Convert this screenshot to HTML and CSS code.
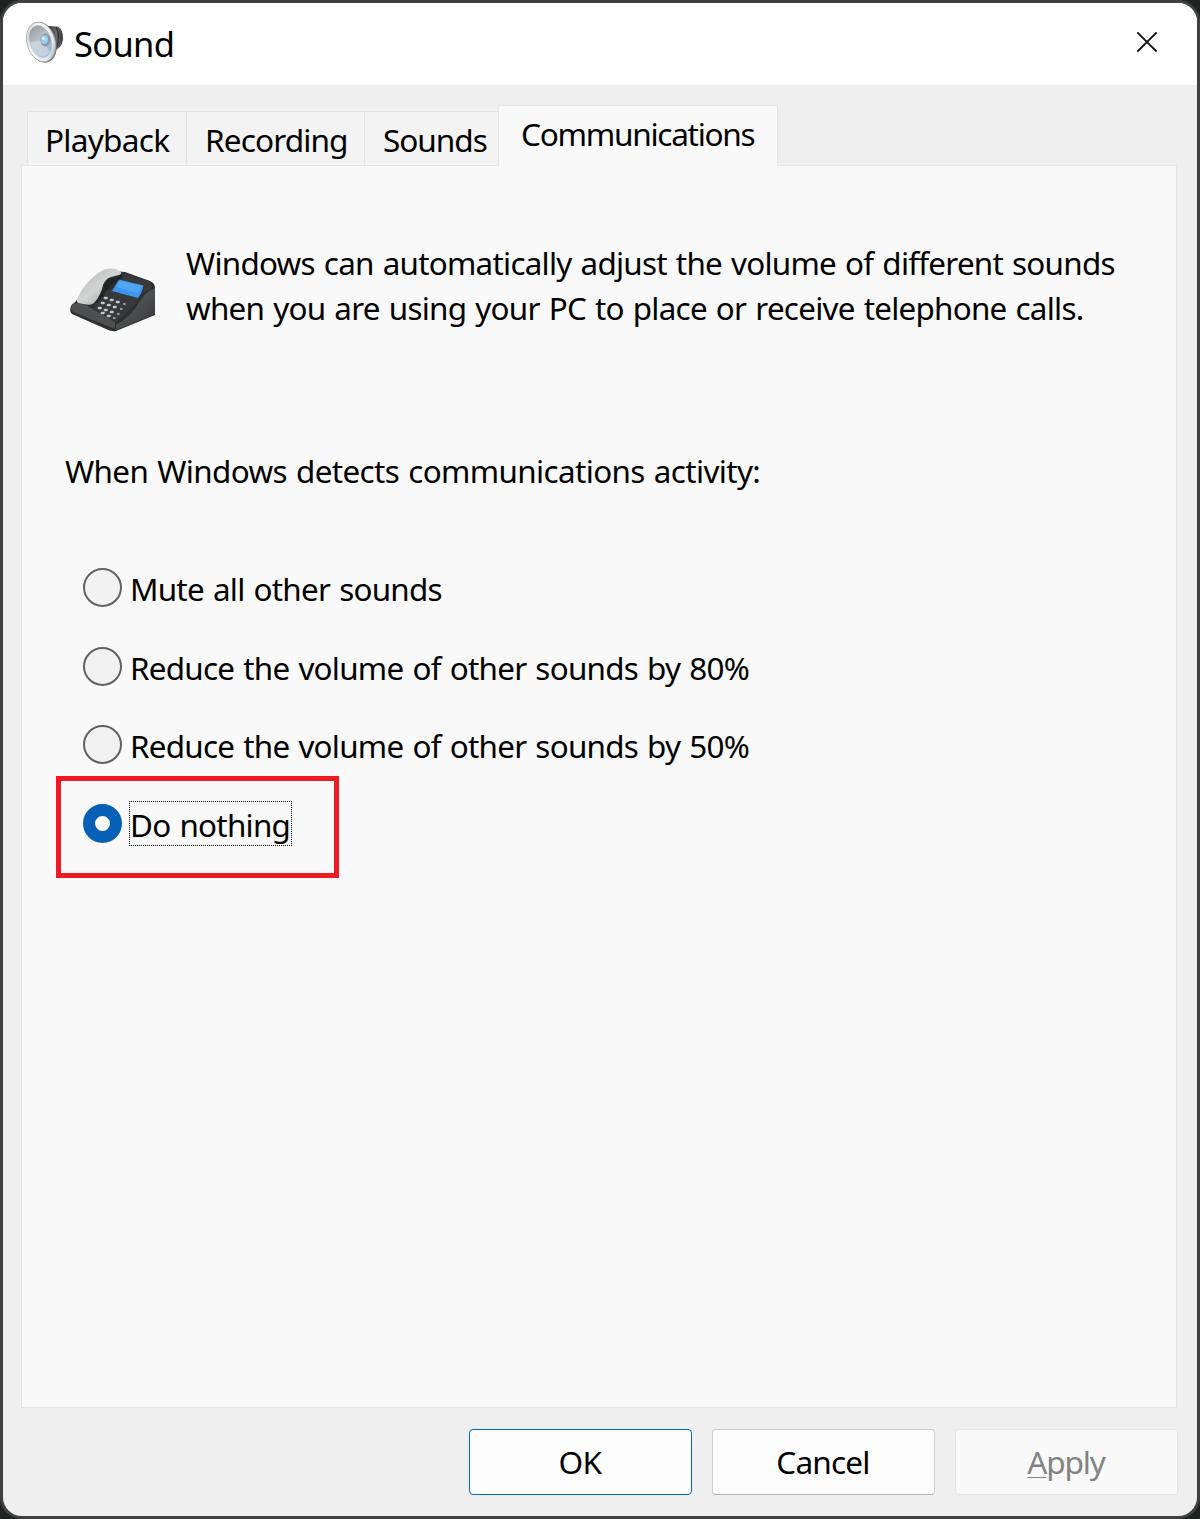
FILE: index.html
```html
<!DOCTYPE html>
<html lang="en">
<head>
<meta charset="utf-8">
<title>Sound</title>
<link rel="stylesheet" href="styles.css">
</head>
<body>
<main class="window">
  <header class="titlebar">
    <svg class="speaker" width="40" height="44" viewBox="0 0 40 44" aria-hidden="true">
      <defs>
        <linearGradient id="rim" x1="0" y1="0" x2="1" y2="1"><stop offset="0" stop-color="#b5b7b8"/><stop offset=".35" stop-color="#fbfbfb"/><stop offset=".75" stop-color="#e3e5e6"/><stop offset="1" stop-color="#7e8182"/></linearGradient>
        <linearGradient id="cone" x1="0" y1="0" x2=".3" y2="1"><stop offset="0" stop-color="#8f9599"/><stop offset=".5" stop-color="#b9c0c6"/><stop offset="1" stop-color="#9dbbd6"/></linearGradient>
        <linearGradient id="magnet" x1="0" y1="0" x2="1" y2="0"><stop offset="0" stop-color="#303234"/><stop offset=".6" stop-color="#6b6e70"/><stop offset="1" stop-color="#303234"/></linearGradient>
      </defs>
      <path d="M23 6 L33 6.500 Q38 9 38 19 Q37 27 31 30 L25 36Z" fill="url(#magnet)"/>
      <path d="M31 7 Q36 16 31 29" fill="none" stroke="#2b2d2f" stroke-width="1.200"/>
      <ellipse cx="17.200" cy="22.300" rx="14" ry="20.800" transform="rotate(-16 17.200 22.300)" fill="#707476"/>
      <ellipse cx="16" cy="22" rx="14" ry="20.200" transform="rotate(-16 16 22)" fill="url(#rim)" stroke="#a6a9ab" stroke-width=".8"/>
      <ellipse cx="15.500" cy="21.500" rx="11" ry="16.500" transform="rotate(-16 15.500 21.500)" fill="url(#cone)"/>
      <path d="M5 22 L18 21 L25 32 Q18 40 11 34 Q6 29 5 22Z" fill="#dce2e8" opacity=".55"/>
      <ellipse cx="20.500" cy="20" rx="5" ry="6.500" fill="#8798a7"/>
      <ellipse cx="19.500" cy="19.500" rx="3.500" ry="4.500" fill="#a3cbed"/>
      <circle cx="18.500" cy="18.500" r="1.600" fill="#d9ecfb"/>
    </svg>
    <h1 class="title"><span class="t-title">Sound</span></h1>
    <svg class="close" width="22" height="22" viewBox="0 0 22 22" aria-label="Close"><path d="M1.300 1.300 L20.700 20.700 M20.700 1.300 L1.300 20.700" stroke="#111" stroke-width="1.900" fill="none"/></svg>
  </header>
  <nav class="tabs">
    <div class="tab playback"><span class="t-playback">Playback</span></div>
    <div class="tab recording"><span class="t-recording">Recording</span></div>
    <div class="tab sounds"><span class="t-sounds">Sounds</span></div>
    <div class="tab active"><span class="t-comm">Communications</span></div>
  </nav>
  <section class="pane">
    <div class="intro">
      <svg class="phone" width="90" height="66" viewBox="0 0 90 66" aria-hidden="true">
        <defs>
          <linearGradient id="handset" x1="0" y1="0" x2="1" y2="1"><stop offset="0" stop-color="#b4b6b7"/><stop offset=".5" stop-color="#d2d4d4"/><stop offset="1" stop-color="#929596"/></linearGradient>
          <linearGradient id="side" x1="0" y1="0" x2="1" y2="1"><stop offset="0" stop-color="#606163"/><stop offset="1" stop-color="#38393b"/></linearGradient>
        </defs>
        <path d="M2 38 L14 26 L44 3 L56 4 L81 13 Q86 15 86 20 L86 47 L47 63 Q43 64 37 61 L3 46 Q0 43 2 38Z" fill="#2d2e30"/>
        <path d="M86 20 L86 46 L47 62 L47 57 Q62 49 71 33 Q77 23 86 20Z" fill="url(#side)"/>
        <path d="M3 36 L12 34 L46 54 L46 61 L4 44 Q1 41 3 36Z" fill="#4d4f51"/>
        <path d="M54 5 L80 13 Q84 15 82 21 Q72 24 68 35 L47 54 L25 41 L30 27 L44 20Z" fill="#37393b"/>
        <path d="M50 11.500 L74.500 17.500 Q73 25 69 30 L43 23Z" fill="#3c96ed"/>
        <path d="M51 12.500 L73 18 L69 25 L47 19Z" fill="#52a5f2"/>
        <path d="M8 32 Q10 25 15 19 Q23 8 35 1.500 Q41 0 47 1 L52 4 Q53 6 50 7 L42 9 Q37 10 34 17 Q32 28 25 35 Q22 38 12 35.500 Q7 35 8 32Z" fill="url(#handset)"/>
        <path d="M34 20 Q37 10 49 8 L53 6 L54 9 L41 18 Q37 21 35 28 L26 36Z" fill="#222426"/>
        <g stroke="#c6c7c8" stroke-width="2.700" stroke-linecap="round">
          <path d="M36 30 h1.500 M42 32 h1.500 M48 34 h1.500 M33 35 h1.500 M39 37 h1.500 M45 39 h1.500 M30 40 h1.500 M36 42 h1.500 M42 44 h1.500 M33 45 h1.500 M39 48 h1.500"/>
        </g>
        <g stroke="#96999b" stroke-width="2"><path d="M54 36 h2.500 M51 41 h2.500 M48 46 h2.500 M44 50 h2.500"/></g>
      </svg>
      <p class="intro-text"><span class="t-body">Windows can automatically adjust the volume of different sounds</span><br><span class="t-body">when you are using your PC to place or receive telephone calls.</span></p>
    </div>
    <p class="question"><span class="t-question">When Windows detects communications activity:</span></p>
    <div class="options">
      <div class="option"><i class="radio"></i><span class="label t-body">Mute all other sounds</span></div>
      <div class="option"><i class="radio"></i><span class="label t-body">Reduce the volume of other sounds by 80%</span></div>
      <div class="option third"><i class="radio"></i><span class="label t-body">Reduce the volume of other sounds by 50%</span></div>
      <div class="option selected"><i class="radio checked"></i><span class="label focus t-body">Do nothing</span></div>
    </div>
  </section>
  <footer class="buttons">
    <div class="button default"><span class="t-ok">OK</span></div>
    <div class="button"><span class="t-cancel">Cancel</span></div>
    <div class="button disabled"><span class="t-apply"><span class="key">A</span>pply</span></div>
  </footer>
</main>
</body>
</html>
```
FILE: styles.css
```css
* { box-sizing: border-box; }
html { background: #1d231f; }
body {
  margin: 0;
  width: 1200px;
  height: 1519px;
  overflow: hidden;
  font: 31.4px/45px "Noto Sans", "Open Sans", sans-serif;
  color: #000;
}
h1, p { margin: 0; font: inherit; }
span { white-space: pre; }
.window {
  display: flex;
  flex-direction: column;
  width: 1200px;
  height: 1519px;
  border: 3px solid #404040;
  border-radius: 22px;
  background: #efefef;
  overflow: hidden;
}
.titlebar {
  display: flex;
  flex: none;
  height: 82px;
  padding-left: 22px;
  background: #fff;
}
.speaker { margin-top: 17px; }
.title { margin: 18px 0 0 9px; font-size: 34.5px; }
.close { margin: 28px 39px 0 auto; }
.tabs {
  display: flex;
  align-items: flex-end;
  height: 61px;
  margin: 20px 0 0 24px;
  position: relative;
  z-index: 1;
  font-size: 31.6px;
}
.tab {
  height: 55px;
  padding: 5px 0 0 18px;
  border: 1px solid #e5e5e5;
  border-width: 1px 0 1px 1px;
  background: #f3f3f3;
}
.playback { width: 159px; padding-left: 17px; }
.recording { width: 178px; }
.sounds { width: 135px; }
.tab.active {
  width: 280px;
  height: 61px;
  margin-left: -1px;
  padding-left: 22px;
  border-width: 1px 1px 0;
  border-radius: 2px 2px 0 0;
  background: #f9f9f9;
}
.pane {
  flex: none;
  width: 1156px;
  height: 1243px;
  margin: -1px 0 0 18px;
  border: 1px solid #e5e5e5;
  background: #f9f9f9;
}
.intro { display: flex; height: 165px; padding: 74px 0 0 47px; }
.phone { flex: none; margin-top: 28px; }
.intro-text { margin-left: 27px; }
.question { margin: 117px 0 0 43px; }
.options { margin: 55px 0 0 34px; }
.option {
  display: flex;
  align-items: center;
  height: 79px;
  padding-left: 27px;
}
.third { height: 77px; }
.radio {
  width: 39px;
  height: 39px;
  border: 2px solid #606263;
  border-radius: 50%;
  background: #f2f2f2;
}
.checked { border: 12px solid #0560b6; background: #fff; }
.label { height: 45px; margin-left: 7px; padding: 1px 1px 0; }
.option.selected {
  width: 283px;
  height: 102px;
  margin-top: -7px;
  padding: 0 0 7px 22px;
  border: 5px solid #ed1c24;
}
.focus { width: 163px; border: 1px dotted #000; padding: 0; }
.buttons { display: flex; gap: 20px; margin: 21px 0 0 466px; font-size: 31.6px; }
.button {
  width: 223px;
  height: 66px;
  padding: 9px 1px 0 0;
  border: 1px solid #d0d0d0;
  border-bottom-color: #b0b0b0;
  border-radius: 4px;
  background: #fdfdfd;
  text-align: center;
}
.default { border-color: #0067c0; }
.disabled { border-color: #e5e5e5; background: #f9f9f9; color: #838383; }
.key { text-decoration: underline; text-decoration-thickness: 1px; text-underline-offset: 3px; }

.t-title { letter-spacing: -0.7px; }
.t-playback { letter-spacing: -0.75px; }
.t-recording { letter-spacing: -0.9px; }
.t-sounds { letter-spacing: -1.05px; }
.t-comm { letter-spacing: -1.3px; }
.t-body { letter-spacing: -0.75px; word-spacing: 1.6px; }
.t-question { letter-spacing: -0.62px; word-spacing: 1.5px; }
.t-ok { letter-spacing: -0.7px; }
.t-cancel { letter-spacing: -0.85px; }
.t-apply { letter-spacing: -1.2px; }
```
